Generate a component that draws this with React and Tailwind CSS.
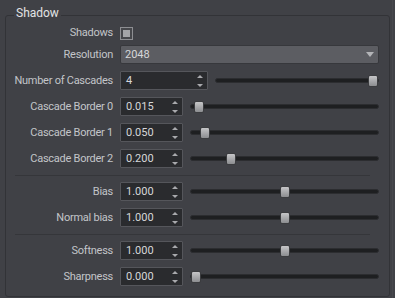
import React from "react";

const Up = () => (
  <svg width="6" height="3" viewBox="0 0 6 3"><path d="M0 3 L3 0 L6 3 Z" fill="#a9aaad" /></svg>
);
const Down = () => (
  <svg width="6" height="3" viewBox="0 0 6 3"><path d="M0 0 L3 3 L6 0 Z" fill="#a9aaad" /></svg>
);

function Spin({ value, wide }) {
  return (
    <div
      className={`flex items-center justify-between h-[19px] ${wide ? "w-[88px]" : "w-[63px]"} shrink-0 bg-[#2a2b2e] border border-[#55565b] rounded-[1px] pl-[5px] pr-[4px] text-[#d6d7d9]`}
    >
      <span>{value}</span>
      <div className="flex flex-col gap-[6px]">
        <Up />
        <Down />
      </div>
    </div>
  );
}

function Slider({ frac }) {
  return (
    <div className="relative flex-1 h-[12px] flex items-center">
      <div className="w-full h-[5px] rounded-full bg-[#1e1f21] border border-[#2c2d30]" />
      <div
        className="absolute top-0 w-[10px] h-[12px] rounded-[2px] border border-[#3b3c3f] bg-gradient-to-b from-[#c6c6c8] to-[#8c8d90]"
        style={{ left: `calc(${frac} * (100% - 12px) + 1px)` }}
      />
    </div>
  );
}

function Row({ label, children, h = "h-[19px]" }) {
  return (
    <div className={`grid grid-cols-[107px_1fr] gap-x-[7px] items-center ${h}`}>
      <div className="text-right text-[#c3c5c9] whitespace-nowrap tracking-[-0.25px]">{label}</div>
      <div className="flex items-center gap-[7px] min-w-0">{children}</div>
    </div>
  );
}

const Sep = () => <div className="h-px bg-[#35363a] ml-[9px] mr-[9px] -mb-px" />;

export default function App() {
  const rows1 = [
    ["Cascade Border 0", "0.015", 0.015],
    ["Cascade Border 1", "0.050", 0.05],
    ["Cascade Border 2", "0.200", 0.2],
  ];
  return (
    <div
      className="w-[395px] h-[298px] bg-[#404146] overflow-hidden text-[11px] leading-[14px] flex"
      style={{ fontFamily: "Roboto, 'Noto Sans', sans-serif" }}
    >
      <fieldset className="ml-[5px] w-[385px] h-[283px] mt-[14px] border border-[#323337] rounded-[3px] flex flex-col">
        <legend className="ml-[8px] px-[2px] h-[2px]">
          <span className="relative -top-[8px] text-[12px] text-[#e2e3e5]">Shadow</span>
        </legend>
        <div className="flex flex-col gap-[7px] pt-[10px] pr-[10px]">
          <Row label="Shadows" h="h-[13px] -mb-px">
            <div className="w-[13px] h-[13px] border border-[#8d8e92] bg-[#46474b] p-[2px]">
              <div className="w-full h-full bg-[#a3a4a7]" />
            </div>
          </Row>
          <Row label="Resolution">
            <div className="flex-1 h-[19px] flex items-center justify-between bg-[#5c5d62] border border-[#37383c] rounded-[2px] pl-[4px] pr-[4px] text-[#d6d7d9]">
              <span>2048</span>
              <svg width="8" height="5" viewBox="0 0 8 5"><path d="M0 0 L4 5 L8 0 Z" fill="#b3b4b7" /></svg>
            </div>
          </Row>
          <Row label="Number of Cascades">
            <Spin value="4" wide />
            <Slider frac={1} />
          </Row>
          {rows1.map(([l, v, f]) => (
            <Row key={l} label={l}>
              <Spin value={v} />
              <Slider frac={f} />
            </Row>
          ))}
          <Sep />
          <Row label="Bias">
            <Spin value="1.000" />
            <Slider frac={0.5} />
          </Row>
          <Row label="Normal bias">
            <Spin value="1.000" />
            <Slider frac={0.5} />
          </Row>
          <Sep />
          <Row label="Softness">
            <Spin value="1.000" />
            <Slider frac={0.5} />
          </Row>
          <Row label="Sharpness">
            <Spin value="0.000" />
            <Slider frac={0} />
          </Row>
        </div>
      </fieldset>
      <div className="w-px h-full bg-[#47484d] ml-[2px]" />
    </div>
  );
}
